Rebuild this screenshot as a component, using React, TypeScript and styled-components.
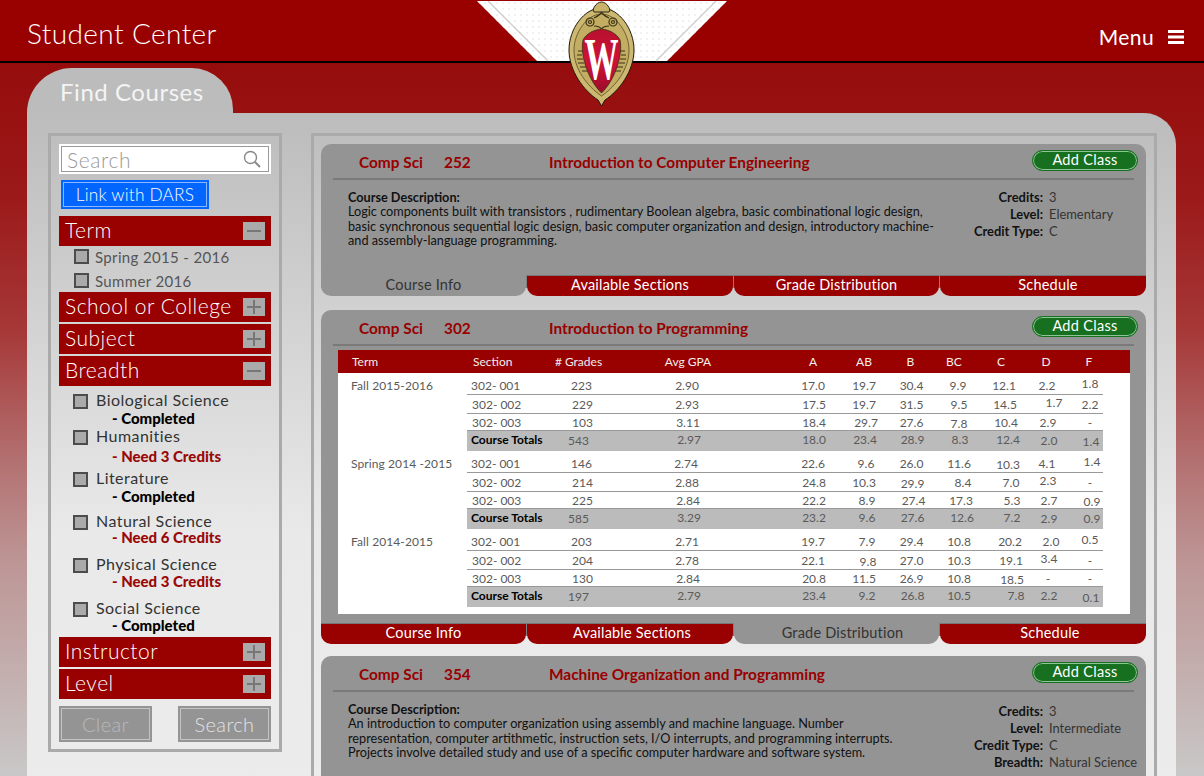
import React from 'react';
import styled, { createGlobalStyle } from 'styled-components';

type Cell = string | [string, number, number?];

const RED = '#990000';
const COLS = '62px 105px 106px 45px 56px 46px 49px 44px 48px 38px 48px';

const GlobalStyle = createGlobalStyle`
  html, body {
    margin: 0;
    padding: 0;
    background: #960c0c;
  }
  * {
    box-sizing: border-box;
  }
`;

const Page = styled.div`
  position: relative;
  width: 1204px;
  height: 776px;
  overflow: hidden;
  font-family: Lato, 'Open Sans', sans-serif;
  background: linear-gradient(
    180deg,
    #960c0c 62px,
    #9c1a1a 200px,
    #a63838 330px,
    #b37070 460px,
    #bd9595 560px,
    #c4b0b0 680px,
    #c9c8c8 776px
  );
`;

const Header = styled.header`
  height: 63px;
  padding: 4px 20px 0 27px;
  display: flex;
  align-items: center;
  justify-content: space-between;
  background: ${RED};
  border-bottom: 2px solid #000;
  color: #fff;
`;

const Title = styled.h1`
  margin: 0;
  font-size: 28px;
  font-weight: 300;
  letter-spacing: 0.4px;
`;

const MenuLink = styled.div`
  display: flex;
  align-items: center;
  gap: 14px;
  font-size: 21px;
  letter-spacing: 0.4px;
  padding-top: 8px;
`;

const Emblem = styled.div`
  position: absolute;
  left: 477px;
  top: 1px;
  z-index: 3;
  width: 250px;
  height: 106px;
`;

const Workspace = styled.main`
  padding: 5px 28px 0 27px;
`;

const FolderTab = styled.div`
  width: 206px;
  height: 45px;
  padding: 9px 0 0 33px;
  background: #bcbcbc;
  border-radius: 50px 46px 0 0;
  color: #f4f4f4;
  font-size: 24px;
  letter-spacing: 0.55px;
`;

const Panel = styled.div`
  display: flex;
  gap: 29px;
  height: 700px;
  padding: 20px 19px 0 21px;
  background: linear-gradient(180deg, #bcbcbc 0, #e9e9e9 420px, #ececec 100%);
  border-radius: 0 32px 0 0;
`;

const Sidebar = styled.aside`
  flex: 0 0 234px;
  align-self: flex-start;
  display: flex;
  flex-direction: column;
  padding: 8px 8px 7px;
  border: 3px solid #aaa;
`;

const SearchBox = styled.div`
  height: 30px;
  padding: 0 8px 0 6px;
  display: flex;
  align-items: center;
  justify-content: space-between;
  background: #fff;
  border: 2px solid #fff;
  box-shadow: inset 0 0 0 1px #999;
  color: #999;
  font-size: 21px;
  font-weight: 300;
  letter-spacing: 0.6px;
`;

const DarsButton = styled.button`
  width: 148px;
  height: 29px;
  margin: 6px 0 7px 2px;
  padding: 0;
  background: #0066ff;
  border: 2px solid #0066ff;
  box-shadow: inset 0 0 0 1px #8ab8ff;
  color: #fff;
  font-family: inherit;
  font-size: 17.3px;
  font-weight: 300;
  letter-spacing: 0.2px;
`;

const Accordion = styled.div`
  display: flex;
  flex-direction: column;
  gap: 2px;
`;

const SectionBar = styled.div`
  height: 30px;
  padding: 0 6px 0 6px;
  display: flex;
  align-items: center;
  justify-content: space-between;
  background: ${RED};
  color: #fff;
  font-size: 21px;
  font-weight: 300;
  letter-spacing: 0.5px;
`;

const SectionLabel = styled.span`
  padding-bottom: 4px;
`;

const Toggle = styled.span<{ $open?: boolean }>`
  position: relative;
  flex: 0 0 22px;
  height: 18px;
  background: #aaa;
  &::before {
    content: '';
    position: absolute;
    left: 4px;
    top: 8px;
    width: 14px;
    height: 2px;
    background: #777;
  }
  &::after {
    content: '';
    display: ${p => (p.$open ? 'none' : 'block')};
    position: absolute;
    left: 10px;
    top: 2px;
    width: 2px;
    height: 14px;
    background: #777;
  }
`;

const TermList = styled.div`
  padding: 1px 0 2px 15px;
  display: flex;
  flex-direction: column;
  gap: 9px;
`;

const TermOption = styled.label`
  height: 15px;
  display: flex;
  align-items: center;
  gap: 6px;
  color: #555;
  font-size: 15px;
  letter-spacing: 0.35px;
  white-space: nowrap;
`;

const Check = styled.span`
  flex: 0 0 15px;
  align-self: flex-start;
  height: 15px;
  background: #aaa;
  border: 2px solid #4c4c4c;
`;

const BreadthList = styled.div`
  padding: 6px 0 0 14px;
`;

const BreadthItem = styled.div<{ $height: number }>`
  height: ${p => p.$height}px;
`;

const BreadthName = styled.label`
  height: 15px;
  padding-bottom: 3px;
  display: flex;
  align-items: center;
  gap: 8px;
  color: #333;
  font-size: 16px;
  line-height: 14px;
  letter-spacing: 0.45px;
  white-space: nowrap;
`;

const BreadthStatus = styled.div<{ $need?: boolean; $gap: number }>`
  margin: ${p => p.$gap}px 0 0 39px;
  color: ${p => (p.$need ? '#9a0808' : '#000')};
  font-size: 15px;
  line-height: 14px;
  font-weight: 900;
  white-space: nowrap;
`;

const FormButtons = styled.div`
  margin-top: 7px;
  display: flex;
  justify-content: space-between;
`;

const GhostButton = styled.button<{ $dim?: boolean }>`
  width: 93px;
  height: 36px;
  padding: 0;
  background: #949494;
  border: 2px solid #949494;
  box-shadow: inset 0 0 0 1px #c4c4c4;
  color: ${p => (p.$dim ? '#b9b9b9' : '#e2e2e2')};
  font-family: inherit;
  font-size: 20px;
  font-weight: 300;
  letter-spacing: 0.4px;
`;

const Results = styled.section`
  flex: 0 0 846px;
  height: 660px;
  padding: 8px 8px 8px 7px;
  border: 3px solid #aaa;
  border-bottom: 0;
`;

const Card = styled.article<{ $below: number }>`
  margin-bottom: ${p => p.$below}px;
`;

const CardBody = styled.div<{ $height: number }>`
  height: ${p => p.$height}px;
  background: #949494;
  border-radius: 10px 10px 0 0;
`;

const CardHead = styled.div`
  position: relative;
  height: 36px;
  margin: 0 12px;
  padding: 1px 0 0 26px;
  display: flex;
  align-items: center;
  border-bottom: 2px solid #7a7a7a;
  color: ${RED};
  font-size: 15.4px;
  font-weight: 700;
`;

const Dept = styled.span`
  width: 85px;
`;

const Num = styled.span`
  width: 105px;
`;

const AddClass = styled.button`
  position: absolute;
  right: -4px;
  top: 6px;
  width: 106px;
  height: 21px;
  padding: 0 0 2px;
  background: #17701f;
  border: 1px solid #17701f;
  border-radius: 11px;
  box-shadow: inset 0 0 0 1px #8fc596;
  color: #fff;
  font-family: inherit;
  font-size: 14.5px;
  letter-spacing: 0.3px;
`;

const CardInfo = styled.div`
  display: flex;
  justify-content: space-between;
  padding: 10px 0 0 27px;
  color: #111;
`;

const Description = styled.div`
  padding-top: 1px;
  font-size: 12.7px;
  line-height: 14.5px;
  white-space: nowrap;
  strong {
    display: block;
    line-height: 13px;
    font-weight: 700;
  }
`;

const Meta = styled.dl<{ $top: number }>`
  margin: ${p => p.$top}px 0 0;
  width: 198px;
  font-size: 12.9px;
  display: grid;
  grid-template-columns: 95px 1fr;
  column-gap: 6px;
  grid-auto-rows: 17px;
  align-items: center;
  dt {
    text-align: right;
    font-weight: 700;
    white-space: nowrap;
  }
  dd {
    margin: 0;
    color: #333;
    white-space: nowrap;
  }
`;

const TabRow = styled.div`
  display: grid;
  grid-template-columns: 205px 206px 205px 1fr;
  gap: 1px;
  height: 21px;
  background: linear-gradient(180deg, #808080 60%, transparent 60%);
`;

const Tab = styled.div<{ $active?: boolean; $shift: number }>`
  padding: 0 0 3px ${p => p.$shift}px;
  display: flex;
  align-items: center;
  justify-content: center;
  background: ${p => (p.$active ? '#949494' : RED)};
  border-top: 1px solid ${p => (p.$active ? '#949494' : '#777')};
  border-radius: 0 0 10px 10px;
  color: ${p => (p.$active ? '#333' : '#fff')};
  font-size: 14.5px;
  letter-spacing: 0.2px;
`;

const GradeTable = styled.div`
  margin: 4px 16px 0 17px;
  padding-bottom: 7px;
  background: #fff;
  color: #5a5a5a;
  font-size: 12px;
`;

const GradeHead = styled.div`
  height: 23px;
  display: grid;
  grid-template-columns: 129px ${COLS};
  align-items: center;
  background: ${RED};
  color: #eee;
`;

const TermHead = styled.span`
  padding-left: 14px;
`;

const GradeGroup = styled.div`
  display: grid;
  grid-template-columns: 129px 636px;
`;

const TermName = styled.div`
  padding: 5px 0 0 13px;
  white-space: nowrap;
  letter-spacing: 0.1px;
`;

const GradeRow = styled.div<{ $height: number; $total?: boolean }>`
  height: ${p => p.$height}px;
  padding-top: ${p => (p.$height > 20 ? 4 : 0)}px;
  padding-bottom: ${p => (p.$total ? 3 : 0)}px;
  display: grid;
  grid-template-columns: ${COLS};
  align-items: center;
  background: ${p => (p.$total ? '#bbb' : 'transparent')};
  border-bottom: ${p => (p.$total ? 'none' : '1px solid #999')};
`;

const GradeCell = styled.span<{ $dx: number; $dy: number; $left?: boolean; $bold?: boolean }>`
  justify-self: ${p => (p.$left ? 'start' : 'center')};
  padding-left: ${p => (p.$left ? 4 : 0)}px;
  transform: translate(${p => p.$dx}px, ${p => p.$dy}px);
  color: ${p => (p.$bold ? '#000' : 'inherit')};
  font-weight: ${p => (p.$bold ? 700 : 400)};
  white-space: nowrap;
  &:nth-child(4) {
    grid-column: 5;
  }
`;

const HeadCell = styled.span<{ $dx: number; $left?: boolean }>`
  justify-self: ${p => (p.$left ? 'start' : 'center')};
  padding-left: ${p => (p.$left ? 6 : 0)}px;
  transform: translateX(${p => p.$dx}px);
  white-space: nowrap;
  &:nth-child(5) {
    grid-column: 6;
  }
`;

const HamburgerIcon = () => (
  <svg width="16" height="14" viewBox="0 0 16 14" fill="#fff">
    <rect width="16" height="3" />
    <rect y="5.5" width="16" height="3" />
    <rect y="11" width="16" height="3" />
  </svg>
);

const SearchIcon = () => (
  <svg width="18" height="18" viewBox="0 0 18 18" fill="none" stroke="#888">
    <circle cx="7.5" cy="7.5" r="6" strokeWidth="1.4" />
    <path d="M12 12l5 5" strokeWidth="2" />
  </svg>
);

const Crest = () => (
  <svg width="250" height="106" viewBox="0 0 250 106">
    <defs>
      <pattern id="dots" width="6" height="6" patternUnits="userSpaceOnUse">
        <circle cx="2" cy="2" r="1" fill="#ececec" />
      </pattern>
      <linearGradient id="shield" x1="0" y1="0" x2="0" y2="1">
        <stop offset="0" stopColor="#b8102f" />
        <stop offset="0.5" stopColor="#cf1236" />
        <stop offset="1" stopColor="#9c0c2a" />
      </linearGradient>
    </defs>
    <polygon points="0,0 250,0 190,60 60,60" fill="#fff" />
    <polygon points="0,0 250,0 190,60 60,60" fill="url(#dots)" />
    <path d="M11 0l60 60M239 0l-60 60" stroke="#cfcfcf" strokeWidth="1.4" />
    <g transform="translate(92 0)">
      <path
        d="M32.5 7C50 7 65 28 65 49C65 70 50 90 36 99L32.5 105L29 99C15 90 0 70 0 49C0 28 15 7 32.5 7Z"
        fill="#cdb872"
        stroke="#1f1a0c"
      />
      <path
        d="M32.5 1C35 1 38 3 39 5C41 7 41 10 40 11L25 11C24 10 24 7 26 5C27 3 30 1 32.5 1Z"
        fill="#c9b36b"
        stroke="#2a2412"
      />
      <path
        d="M32.5 13C47 13 60 32 60 49C60 68 47 85 32.5 95C18 85 5 68 5 49C5 32 18 13 32.5 13Z"
        fill="#c2ad62"
        stroke="#5a4d22"
        strokeWidth="0.8"
      />
      <g fill="none" stroke="#3a3115" strokeWidth="1.2">
        <circle cx="21" cy="21" r="4" />
        <circle cx="44" cy="21" r="4" />
        <circle cx="21" cy="21" r="1.5" />
        <circle cx="44" cy="21" r="1.5" />
        <path d="M25 17C29 15 32 13 32.5 11C33 13 36 15 40 17M25 25C29 25 31 26 32.5 28C34 26 36 25 40 25" />
        <path d="M9 50h5M8 54h5M8 58h6M9 62h6M11 66h6M13 70h6M56 50h-5M57 54h-5M57 58h-6M56 62h-6M54 66h-6M52 70h-6" />
      </g>
      <path
        d="M32.5 28C41 29 48 33 51 39C54 52 47 78 32.5 92C18 78 11 52 14 39C17 33 24 29 32.5 28Z"
        fill="url(#shield)"
        stroke="#3a3115"
        strokeWidth="0.8"
      />
      <text
        x="32.5"
        y="78"
        textAnchor="middle"
        fill="#fff"
        fontFamily="'Liberation Serif', serif"
        fontWeight="700"
        fontSize="60"
        textLength="34"
        lengthAdjust="spacingAndGlyphs"
      >
        W
      </text>
    </g>
  </svg>
);

const breadths = [
  { name: 'Biological Science', status: '- Completed', height: 36, gap: 2 },
  { name: 'Humanities', status: '- Need 3 Credits', need: true, height: 42, gap: 4 },
  { name: 'Literature', status: '- Completed', height: 43, gap: 2 },
  { name: 'Natural Science', status: '- Need 6 Credits', need: true, height: 43, gap: 0 },
  { name: 'Physical Science', status: '- Need 3 Credits', need: true, height: 44, gap: 1 },
  { name: 'Social Science', status: '- Completed', height: 33, gap: 1 }
];

const gradeHead: [string, number][] = [
  ['Section', 0],
  ['# Grades', -3],
  ['Avg GPA', 1],
  ['A', 0],
  ['AB', 0],
  ['B', -1],
  ['BC', -4],
  ['C', -3],
  ['D', -1],
  ['F', -1]
];

const HEIGHTS = [22, 19, 17, 20];

const grades: { term: string; rows: Cell[][] }[] = [
  {
    term: 'Fall 2015-2016',
    rows: [
      ['302- 001', '223', '2.90', '17.0', '19.7', '30.4', '9.9', '12.1', '2.2', ['1.8', 0, -2]],
      [['302- 002', 1], ['229', 1], '2.93', ['17.5', 1], '19.7', '31.5', ['9.5', 1], ['14.5', 1], ['1.7', 7, -2], '2.2'],
      [['302- 003', 1], ['103', 1], ['3.11', 1], ['18.4', 1], ['29.7', 2], '27.6', ['7.8', 1, 1], ['10.4', 2], ['2.9', 1], '-'],
      ['Course Totals', ['543', -3, 1], ['2.97', 2], ['18.0', 1], ['23.4', 1], ['28.9', 1], ['8.3', 2], ['12.4', 4], ['2.0', 2, 1], ['1.4', 1, 2]]
    ]
  },
  {
    term: 'Spring 2014 -2015',
    rows: [
      ['302- 001', '146', ['2.74', -1], '22.6', ['9.6', 2], '26.0', ['11.6', 1], ['10.3', 4, 1], '4.1', ['1.4', 2, -2]],
      [['302- 002', 1], ['214', 1], '2.88', ['24.8', 1], '10.3', ['29.9', 1, 1], ['8.4', 5], ['7.0', 7], ['2.3', 1, -2], '-'],
      [['302- 003', 1], ['225', 1], ['2.84', 1], ['22.2', 1], ['8.9', 3], ['27.4', 2], ['17.3', 3], ['5.3', 8], ['2.7', 2], ['0.9', 2, 1]],
      ['Course Totals', ['585', -3, 1], ['3.29', 2], ['23.2', 1], ['9.6', 3], ['27.6', 1], ['12.6', 4], ['7.2', 8], ['2.9', 2, 1], ['0.9', 2, 1]]
    ]
  },
  {
    term: 'Fall 2014-2015',
    rows: [
      ['302- 001', '203', '2.71', '19.7', ['7.9', 3], '29.4', ['10.8', 1], ['20.2', 6], ['2.0', 4], ['0.5', 0, -2]],
      [['302- 002', 1], ['204', 1], '2.78', '22.1', ['9.8', 4, 1], '27.0', ['10.3', 1], ['19.1', 7], ['3.4', 2, -2], '-'],
      [['302- 003', 1], ['130', 1], ['2.84', 1], ['20.8', 1], '11.5', '26.9', ['10.8', 1], ['18.5', 8, 1], ['-', 1], '-'],
      ['Course Totals', ['197', -3, 1], ['2.79', 2], ['23.4', 1], ['9.2', 3], ['26.8', 1], ['10.5', 1], ['7.8', 12], ['2.2', 2], ['0.1', 1, 2]]
    ]
  }
];

const TABS = ['Course Info', 'Available Sections', 'Grade Distribution', 'Schedule'];

const Tabs: React.FC<{ active: number; shifts: number[] }> = ({ active, shifts }) => (
  <TabRow>
    {TABS.map((t, i) => (
      <Tab key={t} $active={i === active} $shift={shifts[i]}>
        {t}
      </Tab>
    ))}
  </TabRow>
);

const CourseHead: React.FC<{ num: string; title: string }> = ({ num, title }) => (
  <CardHead>
    <Dept>Comp Sci</Dept>
    <Num>{num}</Num>
    <span>{title}</span>
    <AddClass>Add Class</AddClass>
  </CardHead>
);

const CourseInfo: React.FC<{ lines: string[]; meta: [string, string][]; metaTop: number }> = ({
  lines,
  meta,
  metaTop
}) => (
  <CardInfo>
    <Description>
      <strong>Course Description:</strong>
      {lines.map(l => (
        <div key={l}>{l}</div>
      ))}
    </Description>
    <Meta $top={metaTop}>
      {meta.map(([k, v]) => (
        <React.Fragment key={k}>
          <dt>{k}</dt>
          <dd>{v}</dd>
        </React.Fragment>
      ))}
    </Meta>
  </CardInfo>
);

const Section: React.FC<{ label: string; open?: boolean }> = ({ label, open }) => (
  <SectionBar>
    <SectionLabel>{label}</SectionLabel>
    <Toggle $open={open} />
  </SectionBar>
);

const App: React.FC = () => (
  <Page>
    <GlobalStyle />
    <Header>
      <Title>Student Center</Title>
      <MenuLink>
        Menu
        <HamburgerIcon />
      </MenuLink>
    </Header>
    <Emblem>
      <Crest />
    </Emblem>
    <Workspace>
      <FolderTab>Find Courses</FolderTab>
      <Panel>
        <Sidebar>
          <SearchBox>
            Search
            <SearchIcon />
          </SearchBox>
          <DarsButton>Link with DARS</DarsButton>
          <Accordion>
            <Section label="Term" open />
            <TermList>
              <TermOption>
                <Check />
                Spring 2015 - 2016
              </TermOption>
              <TermOption>
                <Check />
                Summer 2016
              </TermOption>
            </TermList>
            <Section label="School or College" />
            <Section label="Subject" />
            <Section label="Breadth" open />
            <BreadthList>
              {breadths.map(b => (
                <BreadthItem key={b.name} $height={b.height}>
                  <BreadthName>
                    <Check />
                    {b.name}
                  </BreadthName>
                  <BreadthStatus $need={b.need} $gap={b.gap}>
                    {b.status}
                  </BreadthStatus>
                </BreadthItem>
              ))}
            </BreadthList>
            <Section label="Instructor" />
            <Section label="Level" />
          </Accordion>
          <FormButtons>
            <GhostButton $dim>Clear</GhostButton>
            <GhostButton>Search</GhostButton>
          </FormButtons>
        </Sidebar>
        <Results>
          <Card $below={14}>
            <CardBody $height={131}>
              <CourseHead num="252" title="Introduction to Computer Engineering" />
              <CourseInfo
                metaTop={-2}
                lines={[
                  'Logic components built with transistors , rudimentary Boolean algebra, basic combinational logic design,',
                  'basic synchronous sequential logic design, basic computer organization and design, introductory machine-',
                  'and assembly-language programming.'
                ]}
                meta={[
                  ['Credits:', '3'],
                  ['Level:', 'Elementary'],
                  ['Credit Type:', 'C']
                ]}
              />
            </CardBody>
            <Tabs active={0} shifts={[0, 0, 0, 10]} />
          </Card>
          <Card $below={12}>
            <CardBody $height={313}>
              <CourseHead num="302" title="Introduction to Programming" />
              <GradeTable>
                <GradeHead>
                  <TermHead>Term</TermHead>
                  {gradeHead.map(([label, dx], i) => (
                    <HeadCell key={label} $dx={dx} $left={i === 0}>
                      {label}
                    </HeadCell>
                  ))}
                </GradeHead>
                {grades.map(group => (
                  <GradeGroup key={group.term}>
                    <TermName>{group.term}</TermName>
                    <div>
                      {group.rows.map((row, r) => (
                        <GradeRow key={r} $height={HEIGHTS[r]} $total={r === 3}>
                          {row.map((cell, c) => {
                            const [text, dx = 0, dy = 0] = typeof cell === 'string' ? [cell] : cell;
                            return (
                              <GradeCell key={c} $dx={dx} $dy={dy} $left={c === 0} $bold={r === 3 && c === 0}>
                                {text}
                              </GradeCell>
                            );
                          })}
                        </GradeRow>
                      ))}
                    </div>
                  </GradeGroup>
                ))}
              </GradeTable>
            </CardBody>
            <Tabs active={2} shifts={[0, 4, 12, 14]} />
          </Card>
          <Card $below={0}>
            <CardBody $height={200}>
              <CourseHead num="354" title="Machine Organization and Programming" />
              <CourseInfo
                metaTop={0}
                lines={[
                  'An introduction to computer organization using assembly and machine language. Number',
                  'representation, computer artithmetic, instruction sets, I/O interrupts, and programming interrupts.',
                  'Projects involve detailed study and use of a specific computer hardware and software system.'
                ]}
                meta={[
                  ['Credits:', '3'],
                  ['Level:', 'Intermediate'],
                  ['Credit Type:', 'C'],
                  ['Breadth:', 'Natural Science']
                ]}
              />
            </CardBody>
          </Card>
        </Results>
      </Panel>
    </Workspace>
  </Page>
);

export default App;
